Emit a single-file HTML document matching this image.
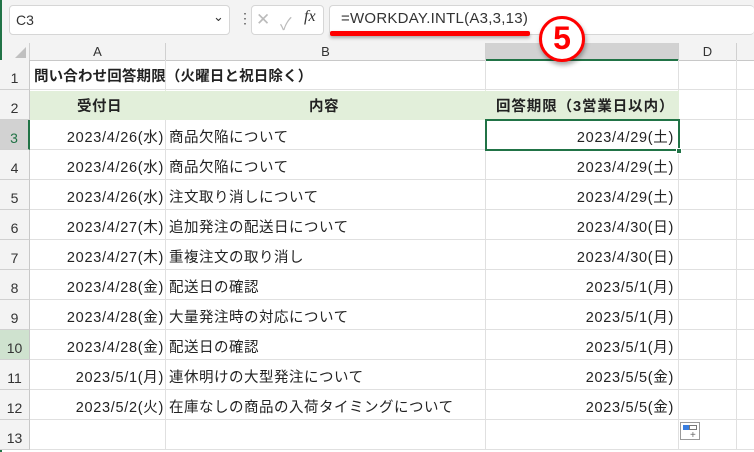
<!DOCTYPE html>
<html><head><meta charset="utf-8"><style>
*{margin:0;padding:0;box-sizing:border-box}
body{width:754px;height:452px;overflow:hidden;background:#fff;font-family:"Liberation Sans","Noto Sans CJK JP",sans-serif;position:relative;color:#222}
.a{position:absolute}
.tb{left:0;top:0;width:754px;height:43px;background:#f3f3f3}
.box{background:#fff;border:1px solid #d6d6d6;border-radius:4px}
.ch{top:43px;height:18px;background:#f3f3f3;border-right:1px solid #d0d0d0;border-bottom:1px solid #c8c8c8;font-size:13px;text-align:center;line-height:18px;color:#333}
.rh{left:0;width:30px;background:#f3f3f3;border-bottom:1px solid #d0d0d0;border-right:1px solid #c8c8c8;font-size:14px;text-align:center;color:#333;padding-top:10px}
.hl{border-bottom:1px solid #e0e0e0;border-right:1px solid #e0e0e0}
.t{font-size:14.5px;line-height:30px;white-space:nowrap;color:#222}
.r{text-align:right;padding-right:6px;letter-spacing:0.7px}
</style></head><body>
<div class="a tb"></div>
<div class="a box" style="left:9px;top:5px;width:221px;height:30px"></div>
<div class="a" style="left:16px;top:12px;font-size:14px;color:#333">C3</div>
<div class="a" style="left:213px;top:9px;font-size:13px;color:#333">⌄</div>
<div class="a" style="left:238px;top:10px;font-size:14px;color:#555">⋮</div>
<div class="a box" style="left:251px;top:5px;width:73px;height:30px"></div>
<div class="a" style="left:256px;top:10px;font-size:17px;color:#bbb">✕</div>
<div class="a" style="left:280px;top:10px;font-size:17px;color:#bbb">✓</div>
<div class="a" style="left:304px;top:8px;font-size:16px;font-style:italic;font-family:'Liberation Serif',serif;color:#333">fx</div>
<div class="a box" style="left:329px;top:5px;width:425px;height:30px;border-right:none"></div>
<div class="a" style="left:341px;top:10px;font-size:15px;color:#333;letter-spacing:0.25px">=WORKDAY.INTL(A3,3,13)</div>
<div class="a" style="left:330px;top:31px;width:200px;height:5px;background:#f00;border-radius:2px;box-shadow:0 2px 3px rgba(0,0,0,.3)"></div>
<div class="a" style="left:539px;top:16px;width:46px;height:46px;border-radius:50%;background:#fff;border:3px solid #f00;box-shadow:1px 3px 5px rgba(0,0,0,.35);z-index:5;text-align:center;font-size:32px;line-height:39px;color:#f00;font-weight:bold">5</div>

<div class="a ch" style="left:0;width:30px"></div>
<div class="a" style="left:15px;top:47px;width:0;height:0;border-left:11px solid transparent;border-bottom:11px solid #c0c0c0"></div>
<div class="a ch" style="left:30px;width:136px">A</div>
<div class="a ch" style="left:166px;width:320px">B</div>
<div class="a ch" style="left:486px;width:193px;background:#d2d2d2;border-bottom:2px solid #217346"></div>
<div class="a ch" style="left:679px;width:58px">D</div>
<div class="a ch" style="left:737px;width:20px"></div>
<div class="a" style="left:0;top:0;width:2px;height:452px;background:#217346"></div>

<div class="a" style="left:30px;top:91px;width:649px;height:29px;background:#e2efda"></div>
<div id="g"></div>
<script>
var H=[60,90,120,150,180,210,240,270,300,330,360,390,420,450];
var g='';
for(var i=0;i<13;i++){var y=H[i],h=30;
 var bg=i==2?'background:#d2d2d2;color:#217346;border-right:2px solid #217346;':(i==9?'background:#cfe2cf;':'');
 g+='<div class="a rh" style="top:'+y+'px;height:'+h+'px;'+bg+'">'+(i+1)+'</div>';
 var cols=[[30,136],[166,320],[486,193],[679,58],[737,20]];
 for(var c=0;c<5;c++){ if(i==1&&c<3)g+='<div class="a" style="left:'+(cols[c][0]+cols[c][1]-1)+'px;top:'+y+'px;width:1px;height:30px;background:#e2efda"></div>';
  else g+='<div class="a hl" style="left:'+cols[c][0]+'px;top:'+y+'px;width:'+cols[c][1]+'px;height:'+h+'px"></div>';}
}
var d=[["2023/4/26(水)","商品欠陥について","2023/4/29(土)"],["2023/4/26(水)","商品欠陥について","2023/4/29(土)"],["2023/4/26(水)","注文取り消しについて","2023/4/29(土)"],["2023/4/27(木)","追加発注の配送日について","2023/4/30(日)"],["2023/4/27(木)","重複注文の取り消し","2023/4/30(日)"],["2023/4/28(金)","配送日の確認","2023/5/1(月)"],["2023/4/28(金)","大量発注時の対応について","2023/5/1(月)"],["2023/4/28(金)","配送日の確認","2023/5/1(月)"],["2023/5/1(月)","連休明けの大型発注について","2023/5/5(金)"],["2023/5/2(火)","在庫なしの商品の入荷タイミングについて","2023/5/5(金)"]];
for(var k=0;k<10;k++){var y=H[k+2]+3;
 g+='<div class="a t r" style="left:20px;top:'+y+'px;width:146px;padding-right:2px">'+d[k][0]+'</div>';
 g+='<div class="a t" style="left:169px;top:'+y+'px;letter-spacing:0.5px">'+d[k][1]+'</div>';
 g+='<div class="a t r" style="left:486px;top:'+y+'px;width:193px;padding-right:5px">'+d[k][2]+'</div>';}
g+='<div class="a t" style="left:34px;top:62px;font-weight:bold;letter-spacing:0.15px">問い合わせ回答期限（火曜日と祝日除く）</div>';
g+='<div class="a t" style="left:77px;top:92px;font-weight:bold;letter-spacing:0.5px">受付日</div>';
g+='<div class="a t" style="left:309px;top:92px;font-weight:bold;letter-spacing:0.5px">内容</div>';
g+='<div class="a t" style="left:496px;top:92px;font-weight:bold;letter-spacing:0.9px">回答期限（3営業日以内）</div>';
g+='<div class="a" style="left:485px;top:119px;width:195px;height:32px;border:2px solid #217346"></div>';
g+='<div class="a" style="left:676px;top:148px;width:6px;height:6px;background:#217346;border:1px solid #fff"></div>';
g+='<div class="a" style="left:680px;top:422px;width:20px;height:18px;border:1px solid #999;background:#fff"><div class="a" style="left:2px;top:2px;width:6px;height:5px;background:#3a7ee0"></div><div class="a" style="left:8px;top:2px;width:8px;height:5px;border:1px solid #777"></div><div class="a" style="left:9px;top:8px;font-size:10px;line-height:9px;color:#666">+</div></div>';
document.getElementById('g').innerHTML=g;
</script>
</body></html>
